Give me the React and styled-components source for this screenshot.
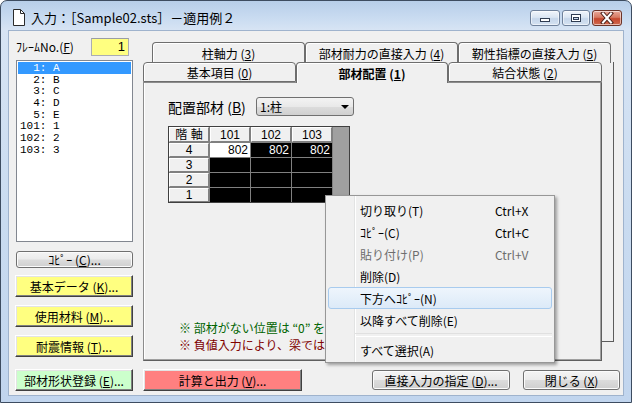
import React from "react";
import styled, { createGlobalStyle } from "styled-components";

const GlobalStyle = createGlobalStyle`
  html, body { margin: 0; padding: 0; background: #ffffff; }
  body {
    font-family: "Noto Sans CJK JP", "Liberation Sans", sans-serif;
    font-size: 12px;
    color: #000;
  }
  * { box-sizing: border-box; }
`;

const Window = styled.div`
  position: relative;
  width: 632px;
  height: 403px;
  display: flex;
  flex-direction: column;
  border: 1px solid #3d4c60;
  border-radius: 7px 7px 0 0;
  background: linear-gradient(180deg, #b7cee9 0px, #cadcf1 18px, #d7e4f4 29px, #c9dbf0 55%, #c1d5ee 100%);
  overflow: hidden;
`;

const TitleBar = styled.div`
  height: 29px;
  flex: none;
  display: flex;
  align-items: center;
  padding: 4px 9px 0 11px;
`;

const TitleText = styled.span`
  margin-left: 6px;
  font-size: 13px;
  color: #000;
  white-space: nowrap;
`;

const CaptionButtons = styled.div`
  margin-left: auto;
  display: flex;
  gap: 2px;
  align-self: flex-start;
  margin-top: 5px;
`;

const CaptionButton = styled.div`
  width: ${p => p.$w}px;
  height: 16px;
  border: 1px solid ${p => (p.$close ? "#6b3328" : "#6f819b")};
  border-radius: 3px;
  background: ${p =>
    p.$close
      ? "linear-gradient(180deg, #e9a99b 0%, #d77a63 45%, #c5472e 55%, #d0694f 100%)"
      : "linear-gradient(180deg, #f1f5fb 0%, #dbe6f3 45%, #c6d6ea 55%, #d4e2f2 100%)"};
  box-shadow: inset 0 0 0 1px rgba(255, 255, 255, 0.55);
  display: flex;
  align-items: center;
  justify-content: center;
`;

const Client = styled.div`
  flex: 1;
  margin: 0 7px 6px 7px;
  background: #f0f0f0;
  border: 1px solid #9fb3cd;
  display: grid;
  grid-template-columns: 118px 479px;
  grid-template-rows: 324px 22px;
  column-gap: 10px;
  row-gap: 8px;
  padding: 6px 0 0 6px;
`;

const LeftColumn = styled.div`
  display: flex;
  flex-direction: column;
`;

const FrameRow = styled.div`
  height: 19px;
  display: flex;
  align-items: center;
  padding-left: 1px;
`;

const FrameLabel = styled.span`
  font-size: 12px;
  white-space: nowrap;
`;

const FrameInput = styled.div`
  margin-left: auto;
  margin-right: 4px;
  width: 38px;
  height: 18px;
  background: #ffff80;
  border: 1px solid #abadb3;
  border-top-color: #9a9da4;
  text-align: right;
  padding-right: 3px;
  font-family: "Liberation Sans", sans-serif;
  font-size: 13px;
  line-height: 16px;
`;

const ListBox = styled.div`
  margin: 4px 0 0 1px;
  height: 182px;
  background: #fff;
  border: 1px solid #828790;
  padding: 1px;
`;

const ListItem = styled.div`
  height: 11.7px;
  line-height: 12px;
  padding-left: 2px;
  white-space: pre;
  font-family: "Liberation Mono", monospace;
  font-size: 11px;
  background: ${p => (p.$selected ? "#3399ff" : "transparent")};
  color: ${p => (p.$selected ? "#fff" : "#000")};
`;

const ThemedButton = styled.div`
  height: ${p => p.$h || 20}px;
  width: ${p => (p.$w ? `${p.$w}px` : "auto")};
  margin: ${p => p.$m || "0"};
  border: 1px solid #707070;
  border-radius: 3px;
  background: linear-gradient(180deg, #f4f4f4 0%, #ebebeb 48%, #dcdcdc 52%, #cfcfcf 100%);
  box-shadow: inset 0 0 0 1px #fbfbfb;
  display: flex;
  align-items: center;
  justify-content: center;
  font-size: 12px;
  white-space: nowrap;
`;

const ColorButton = styled.div`
  height: 22px;
  width: ${p => (p.$w ? `${p.$w}px` : "auto")};
  margin: ${p => p.$m || "0"};
  background: ${p => p.$bg};
  border: 1px solid;
  border-color: #ffffff #404040 #404040 #ffffff;
  box-shadow: inset -1px -1px 0 #808080, inset 1px 1px 0 #e3e3e3;
  display: flex;
  align-items: center;
  justify-content: center;
  font-size: 12px;
  white-space: nowrap;
`;

const Key = styled.span`
  text-decoration: underline;
`;

const TabArea = styled.div`
  position: relative;
  display: flex;
  flex-direction: column;
  padding-top: 5px;
  &::before {
    content: "";
    position: absolute;
    left: 9px;
    top: 25px;
    width: 460px;
    bottom: 19px;
    border: 1px solid #5c5c5c;
    border-top: none;
  }
`;

const TabRow = styled.div`
  position: relative;
  z-index: ${p => (p.$front ? 2 : 1)};
  display: flex;
  height: ${p => (p.$front ? 20 : 21)}px;
  margin-left: ${p => (p.$front ? 0 : 9)}px;
  margin-top: ${p => (p.$front ? -1 : 0)}px;
`;

const Tab = styled.div`
  width: ${p => p.$w}px;
  height: ${p => (p.$selected ? "calc(100% + 1px)" : "100%")};
  flex: none;
  background: #f0f0f0;
  border: 1px solid #6e6e6e;
  border-bottom: ${p => (p.$back || p.$selected ? "none" : "1px solid #6e6e6e")};
  border-radius: 4px 4px 0 0;
  box-shadow: inset 1px 1px 0 #ffffff;
  display: flex;
  align-items: center;
  justify-content: center;
  font-size: 12px;
  font-weight: ${p => (p.$selected ? 700 : 400)};
  white-space: nowrap;
`;

const Panel = styled.div`
  position: relative;
  z-index: 1;
  width: 459px;
  flex: 1;
  background: #f0f0f0;
  border: 1px solid #8c8c8c;
  border-right: 1px solid #5f5f5f;
  border-bottom: 1px solid #5f5f5f;
  box-shadow: inset -1px -1px 0 #a0a0a0, inset 1px 0 0 #ffffff;
  display: flex;
  flex-direction: column;
  padding: 14px 0 7px 24px;
`;

const FieldRow = styled.div`
  display: flex;
  align-items: center;
  height: 19px;
`;

const FieldLabel = styled.span`
  font-size: 14px;
  width: 88px;
  white-space: nowrap;
`;

const Select = styled.div`
  width: 98px;
  height: 19px;
  border: 1px solid #707070;
  border-radius: 3px;
  background: linear-gradient(180deg, #f3f3f3 0%, #e9e9e9 50%, #dcdcdc 51%, #d0d0d0 100%);
  display: flex;
  align-items: center;
  padding-left: 3px;
  font-size: 12px;
`;

const Caret = styled.span`
  margin-left: auto;
  margin-right: 4px;
  width: 0;
  height: 0;
  border-left: 4px solid transparent;
  border-right: 4px solid transparent;
  border-top: 4px solid #000;
`;

const MemberGrid = styled.div`
  margin-top: 10px;
  display: grid;
  grid-template-columns: 40px 40px 40px 40px 16px;
  grid-template-rows: 15px 14px 14px 14px 14px;
  gap: 1px;
  width: fit-content;
  background: #808080;
  border: 1px solid #404040;
`;

const HeadCell = styled.div`
  background: #f0f0f0;
  border: 1px solid;
  border-color: #ffffff #808080 #808080 #ffffff;
  display: flex;
  align-items: center;
  justify-content: center;
  font-family: "Liberation Sans", "Noto Sans CJK JP", sans-serif;
  font-size: 12px;
  line-height: 1;
`;

const DataCell = styled.div`
  background: ${p => (p.$current ? "#ffffff" : "#000000")};
  color: ${p => (p.$current ? "#000" : "#fff")};
  display: flex;
  align-items: center;
  justify-content: flex-end;
  padding-right: 2px;
  font-family: "Liberation Sans", sans-serif;
  font-size: 12px;
  line-height: 1;
`;

const ScrollStrip = styled.div`
  grid-column: 5;
  grid-row: 1 / 6;
  background: #a0a0a0;
`;

const Notes = styled.div`
  margin-top: auto;
  padding-left: 11px;
  white-space: nowrap;
`;

const NoteLine = styled.div`
  font-size: 12px;
  line-height: 17px;
  color: ${p => p.$color};
`;

const ButtonBar = styled.div`
  display: flex;
  align-items: center;
`;

const ContextMenu = styled.div`
  position: absolute;
  left: 324px;
  top: 194px;
  width: 230px;
  height: 168px;
  z-index: 10;
  background-color: #f0f0f0;
  background-image: linear-gradient(90deg, transparent 28px, #e2e3e3 28px, #e2e3e3 29px, #ffffff 29px, #ffffff 30px, transparent 30px);
  border: 1px solid #979797;
  box-shadow: 2px 2px 3px rgba(0, 0, 0, 0.35);
  padding: 3px 2px 1px 2px;
`;

const MenuItem = styled.div`
  height: 22px;
  display: grid;
  grid-template-columns: 135px auto;
  align-items: center;
  padding-left: 31px;
  font-size: 12px;
  color: ${p => (p.$disabled ? "#6d6d6d" : "#000")};
  border: 1px solid ${p => (p.$active ? "#a8cbee" : "transparent")};
  border-radius: 3px;
  background: ${p => (p.$active ? "linear-gradient(180deg, #eef5fc 0%, #dceaf8 100%)" : "transparent")};
`;

const MenuSeparator = styled.div`
  height: 8px;
  margin-left: 27px;
  display: flex;
  flex-direction: column;
  justify-content: center;
  &::after {
    content: "";
    height: 2px;
    border-top: 1px solid #e0e0e0;
    border-bottom: 1px solid #ffffff;
  }
`;

const frames = ["  1: A", "  2: B", "  3: C", "  4: D", "  5: E", "101: 1", "102: 2", "103: 3"];

const menu = [
  { label: "切り取り(T)", key: "Ctrl+X" },
  { label: "ｺﾋﾟｰ(C)", key: "Ctrl+C" },
  { label: "貼り付け(P)", key: "Ctrl+V", disabled: true },
  { label: "削除(D)" },
  { label: "下方へｺﾋﾟｰ(N)", active: true },
  { label: "以降すべて削除(E)" },
  "sep",
  { label: "すべて選択(A)" },
];

function DocIcon() {
  return (
    <svg width="13" height="17" viewBox="0 0 13 17">
      <path d="M1.5 0.5h7l4 4v12h-11z" fill="#fff" stroke="#2b2b2b" />
      <path d="M8.5 0.5v4h4" fill="none" stroke="#2b2b2b" />
    </svg>
  );
}

function MinGlyph() {
  return (
    <svg width="14" height="10" viewBox="0 0 14 10">
      <rect x="2.5" y="5.5" width="9" height="3" fill="#fff" stroke="#2f3c52" />
    </svg>
  );
}

function MaxGlyph() {
  return (
    <svg width="14" height="10" viewBox="0 0 14 10">
      <rect x="2.5" y="1.5" width="9" height="7" fill="#fff" stroke="#2f3c52" />
      <rect x="4.5" y="4.5" width="5" height="2" fill="#cbd9ec" stroke="#2f3c52" />
    </svg>
  );
}

function CloseGlyph() {
  return (
    <svg width="16" height="12" viewBox="0 0 16 12">
      <path d="M4 1.5l8 9M12 1.5l-8 9" stroke="#4a1f18" strokeWidth="4" strokeLinecap="square" />
      <path d="M4 1.5l8 9M12 1.5l-8 9" stroke="#fff" strokeWidth="2" strokeLinecap="square" />
    </svg>
  );
}

export default function App() {
  const rows = ["4", "3", "2", "1"];
  return (
    <>
      <GlobalStyle />
      <Window>
        <TitleBar>
          <DocIcon />
          <TitleText>入力：［Sample02.sts］－適用例２</TitleText>
          <CaptionButtons>
            <CaptionButton $w={30}><MinGlyph /></CaptionButton>
            <CaptionButton $w={28}><MaxGlyph /></CaptionButton>
            <CaptionButton $w={30} $close><CloseGlyph /></CaptionButton>
          </CaptionButtons>
        </TitleBar>

        <Client>
          <LeftColumn>
            <FrameRow>
              <FrameLabel>ﾌﾚｰﾑNo.(<Key>F</Key>)</FrameLabel>
              <FrameInput>1</FrameInput>
            </FrameRow>
            <ListBox>
              {frames.map((f, i) => (
                <ListItem key={f} $selected={i === 0}>{f}</ListItem>
              ))}
            </ListBox>
            <ThemedButton $h={17} $m="9px 0 0 1px">ｺﾋﾟｰ (<Key>C</Key>)...</ThemedButton>
            <ColorButton $bg="#ffff80" $m="7px 0 0 0">基本データ (<Key>K</Key>)...</ColorButton>
            <ColorButton $bg="#ffff80" $m="8px 0 0 0">使用材料 (<Key>M</Key>)...</ColorButton>
            <ColorButton $bg="#ffff80" $m="8px 0 0 0">耐震情報 (<Key>T</Key>)...</ColorButton>
          </LeftColumn>

          <TabArea>
            <TabRow>
              <Tab $w={153} $back>柱軸力 (<Key>3</Key>)</Tab>
              <Tab $w={153} $back>部材耐力の直接入力 (<Key>4</Key>)</Tab>
              <Tab $w={153} $back>靭性指標の直接入力 (<Key>5</Key>)</Tab>
            </TabRow>
            <TabRow $front>
              <Tab $w={153}>基本項目 (<Key>0</Key>)</Tab>
              <Tab $w={152} $selected>部材配置 (<Key>1</Key>)</Tab>
              <Tab $w={154}>結合状態 (<Key>2</Key>)</Tab>
            </TabRow>
            <Panel>
              <FieldRow>
                <FieldLabel>配置部材 (<Key>B</Key>)</FieldLabel>
                <Select>1:柱<Caret /></Select>
              </FieldRow>
              <MemberGrid>
                <HeadCell>階 軸</HeadCell>
                <HeadCell>101</HeadCell>
                <HeadCell>102</HeadCell>
                <HeadCell>103</HeadCell>
                <ScrollStrip />
                {rows.map(r => (
                  <React.Fragment key={r}>
                    <HeadCell>{r}</HeadCell>
                    {[0, 1, 2].map(c => (
                      <DataCell key={c} $current={r === "4" && c === 0}>
                        {r === "4" ? "802" : ""}
                      </DataCell>
                    ))}
                  </React.Fragment>
                ))}
              </MemberGrid>
              <Notes>
                <NoteLine $color="#006400">※ 部材がない位置は “0” を入力してください。</NoteLine>
                <NoteLine $color="#800000">※ 負値入力により、梁では左右、柱では上下を反転して配置します。</NoteLine>
              </Notes>
            </Panel>
          </TabArea>

          <ColorButton $bg="#ccffcc">部材形状登録 (<Key>E</Key>)...</ColorButton>
          <ButtonBar>
            <ColorButton $bg="#ff8080" $w={159}>計算と出力 (<Key>V</Key>)...</ColorButton>
            <ThemedButton $w={138} $m="0 0 0 70px">直接入力の指定 (<Key>D</Key>)...</ThemedButton>
            <ThemedButton $w={97} $m="0 0 0 13px">閉じる (<Key>X</Key>)</ThemedButton>
          </ButtonBar>
        </Client>

        <ContextMenu>
          {menu.map((m, i) =>
            m === "sep" ? (
              <MenuSeparator key={i} />
            ) : (
              <MenuItem key={i} $active={m.active} $disabled={m.disabled}>
                <span>{m.label}</span>
                <span>{m.key || ""}</span>
              </MenuItem>
            )
          )}
        </ContextMenu>
      </Window>
    </>
  );
}
